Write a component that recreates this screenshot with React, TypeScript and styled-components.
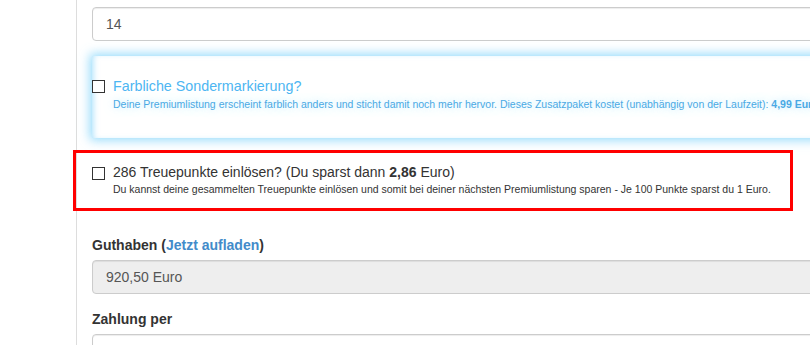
import styled, { createGlobalStyle } from 'styled-components';

const GlobalStyle = createGlobalStyle`
  html, body {
    margin: 0;
    padding: 0;
    background: #fff;
    overflow: hidden;
  }
  body {
    font-family: "Liberation Sans", Arial, sans-serif;
    font-size: 14px;
    line-height: 20px;
    color: #333;
  }
`;

const Page = styled.div`
  width: 810px;
  height: 345px;
  overflow: hidden;
`;

const Column = styled.div`
  margin-left: 76px;
  width: 1000px;
  min-height: 345px;
  border-left: 1px solid #ddd;
  padding: 7px 0 0 15px;
  box-sizing: border-box;
`;

const FormGroup = styled.div`
  margin-bottom: 15px;
`;

const Label = styled.div`
  font-weight: bold;
  margin-bottom: 5px;
`;

const Link = styled.a`
  color: #428bca;
  text-decoration: none;
`;

const Input = styled.div<{ $disabled?: boolean }>`
  height: 34px;
  box-sizing: border-box;
  padding: 6px 13px;
  border: 1px solid #ccc;
  border-radius: 4px;
  background: ${(p) => (p.$disabled ? '#eee' : '#fff')};
  box-shadow: inset 0 1px 1px rgba(0, 0, 0, 0.075);
  color: #555;
  font-size: 14px;
  line-height: 20px;
`;

const GlowBox = styled.div`
  margin-top: 15px;
  height: 82px;
  box-sizing: border-box;
  padding-top: 19px;
  background: #fff;
  box-shadow: 0 0 10px 2px rgba(110, 205, 250, 0.75), inset 4px 0 6px -3px rgba(110, 205, 250, 0.6);
`;

const HighlightBox = styled.div`
  margin: 12px 0 24px -19px;
  width: 720px;
  height: 61px;
  box-sizing: border-box;
  border: 3px solid #f00;
  padding: 9px 0 0 16px;
`;

const CheckRow = styled.div`
  display: flex;
  align-items: flex-start;
  gap: 8px;
`;

const CheckBox = styled.span`
  flex: none;
  width: 13px;
  height: 13px;
  box-sizing: border-box;
  margin-top: 5px;
  border: 1px solid #333;
  background: #fff;
`;

const CheckText = styled.div`
  white-space: nowrap;
`;

const Title = styled.div<{ $tone?: 'blue' }>`
  font-size: ${(p) => (p.$tone ? '14.3px' : '14px')};
  line-height: ${(p) => (p.$tone ? '22px' : '20px')};
  color: ${(p) => (p.$tone ? '#4db6f2' : '#333')};
`;

const Hint = styled.div<{ $tone?: 'blue' }>`
  font-size: 10.5px;
  line-height: 14px;
  color: ${(p) => (p.$tone ? '#4aa9e4' : '#333')};
  ${(p) => (p.$tone ? 'text-shadow: 0 0 8px rgba(140, 215, 255, 0.6);' : '')}
`;

export default function App() {
  return (
    <Page>
      <GlobalStyle />
      <Column>
        <Input>14</Input>

        <GlowBox>
          <CheckRow>
            <CheckBox />
            <CheckText>
              <Title $tone="blue">Farbliche Sondermarkierung?</Title>
              <Hint $tone="blue">
                Deine Premiumlistung erscheint farblich anders und sticht damit noch mehr hervor. Dieses
                Zusatzpaket kostet (unabhängig von der Laufzeit): <b>4,99 Euro</b>
              </Hint>
            </CheckText>
          </CheckRow>
        </GlowBox>

        <HighlightBox>
          <CheckRow>
            <CheckBox />
            <CheckText>
              <Title>
                286 Treuepunkte einlösen? (Du sparst dann <b>2,86</b> Euro)
              </Title>
              <Hint>
                Du kannst deine gesammelten Treuepunkte einlösen und somit bei deiner nächsten
                Premiumlistung sparen - Je 100 Punkte sparst du 1 Euro.
              </Hint>
            </CheckText>
          </CheckRow>
        </HighlightBox>

        <FormGroup>
          <Label>
            Guthaben (<Link href="#">Jetzt aufladen</Link>)
          </Label>
          <Input $disabled>920,50 Euro</Input>
        </FormGroup>

        <FormGroup>
          <Label>Zahlung per</Label>
          <Input />
        </FormGroup>
      </Column>
    </Page>
  );
}
